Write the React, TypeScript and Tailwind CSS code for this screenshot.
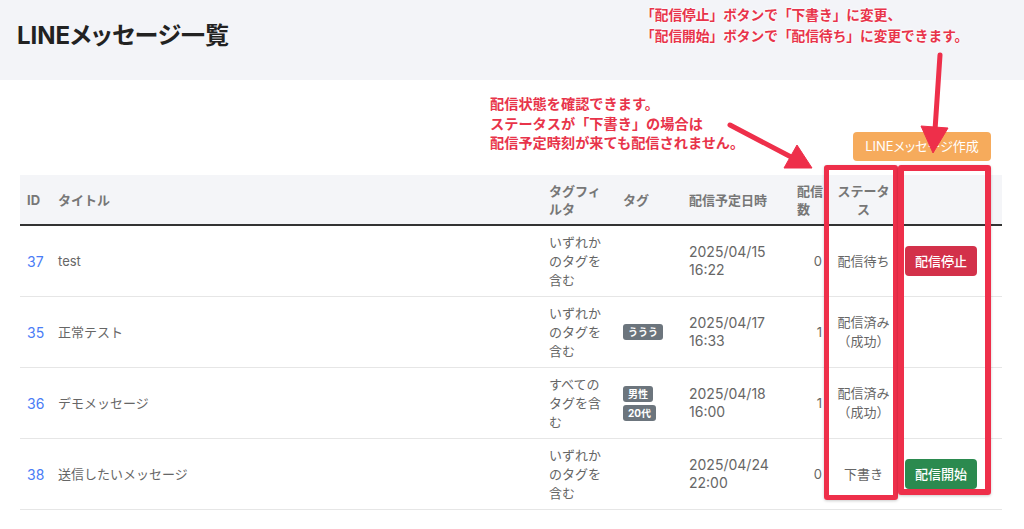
import React from 'react';

type Row = {
  id: number;
  title: string;
  filter: string[];
  tags: string[];
  date: string[];
  count: number;
  status: string[];
  action: 'stop' | 'start' | null;
};

const rows: Row[] = [
  { id: 37, title: 'test', filter: ['いずれか', 'のタグを', '含む'], tags: [], date: ['2025/04/15', '16:22'], count: 0, status: ['配信待ち'], action: 'stop' },
  { id: 35, title: '正常テスト', filter: ['いずれか', 'のタグを', '含む'], tags: ['ううう'], date: ['2025/04/17', '16:33'], count: 1, status: ['配信済み', '（成功）'], action: null },
  { id: 36, title: 'デモメッセージ', filter: ['すべての', 'タグを含', 'む'], tags: ['男性', '20代'], date: ['2025/04/18', '16:00'], count: 1, status: ['配信済み', '（成功）'], action: null },
  { id: 38, title: '送信したいメッセージ', filter: ['いずれか', 'のタグを', '含む'], tags: [], date: ['2025/04/24', '22:00'], count: 0, status: ['下書き'], action: 'start' },
];

const cols = 'grid grid-cols-[30px_491px_74px_66px_108px_41px_67px_105px]';

const Lines = ({ lines }: { lines: string[] }) => (
  <div>
    {lines.map((l, i) => (
      <div key={i}>{l}</div>
    ))}
  </div>
);

// annotation overlay: arrows and red boxes
const Annotations: React.FC = () => (
  <div className="pointer-events-none absolute inset-0">
    <div className="absolute left-[641px] top-[5px] text-[13.7px] leading-[21px] font-bold text-[#e8344a] whitespace-nowrap [text-shadow:0_0_3px_#fff,0_0_3px_#fff]">
      <div>「配信停止」ボタンで「下書き」に変更、</div>
      <div>「配信開始」ボタンで「配信待ち」に変更できます。</div>
    </div>
    <div className="absolute left-[490px] top-[94px] text-[14.2px] leading-[19.5px] font-bold text-[#e8344a] whitespace-nowrap [text-shadow:0_0_3px_#fff,0_0_3px_#fff]">
      <div>配信状態を確認できます。</div>
      <div>ステータスが「下書き」の場合は</div>
      <div>配信予定時刻が来ても配信されません。</div>
    </div>
    <div className="absolute left-[824px] top-[165px] w-[74px] h-[335px] border-[5px] border-[#ee2f4a] rounded-[3px] shadow-[0_1px_3px_rgba(0,0,0,0.2)]" />
    <div className="absolute left-[898px] top-[165px] w-[93px] h-[330px] border-[6px] border-[#ee2f4a] rounded-[3px] shadow-[0_1px_3px_rgba(0,0,0,0.2)]" />
    <svg className="absolute left-0 top-0" width="1024" height="529" viewBox="0 0 1024 529">
      <g fill="#ee2f4a" stroke="#ee2f4a">
        <line x1="940" y1="55" x2="935" y2="130" strokeWidth="5" strokeLinecap="round" />
        <polygon points="921,126 948,128 933,153" strokeWidth="1" strokeLinejoin="round" />
        <line x1="730" y1="125" x2="793" y2="158" strokeWidth="5" strokeLinecap="round" />
        <polygon points="784,168 797,145 812,168" strokeWidth="1" strokeLinejoin="round" />
      </g>
    </svg>
  </div>
);

const App: React.FC = () => {
  return (
    <div className="relative w-[1024px] h-[529px] overflow-hidden bg-white text-[13px] text-[#666] font-['Inter','Noto_Sans_CJK_JP',sans-serif]">
      <div className="h-20 bg-[#f3f4f8] flex items-center pl-[17px] pb-2">
        <h1 className="text-[24px] font-bold text-[#222] [font-feature-settings:'palt']">LINEメッセージ一覧</h1>
      </div>

      <div className="pt-[52px] px-[20px] pr-[22px]">
        <div className="flex justify-end pr-[11px]">
          <button className="w-[138px] h-[29px] rounded-[4px] bg-[#f6ab5c] text-white text-[13px] [font-feature-settings:'palt']">
            LINEメッセージ作成
          </button>
        </div>

        <div className="mt-[14px] w-[982px]">
          <div className={`${cols} h-[51px] bg-[#f4f5f8] border-b-2 border-[#333] items-center font-bold text-[#777] leading-[18px]`}>
            <div className="pl-[7px]">ID</div>
            <div className="pl-2">タイトル</div>
            <div className="pl-2"><Lines lines={['タグフィ', 'ルタ']} /></div>
            <div className="pl-2">タグ</div>
            <div className="pl-2">配信予定日時</div>
            <div className="pl-2 whitespace-nowrap"><Lines lines={['配信', '数']} /></div>
            <div className="text-center"><Lines lines={['ステータ', 'ス']} /></div>
            <div />
          </div>

          {rows.map((r) => (
            <div key={r.id} className={`${cols} h-[71px] border-b border-[#e6e6e6] items-center leading-[19px]`}>
              <div className="pl-[7px] text-[#4a7cf6] text-[14px]">{r.id}</div>
              <div className="pl-2">{r.title}</div>
              <div className="pl-2"><Lines lines={r.filter} /></div>
              <div className="pl-2 flex flex-col items-start gap-[3px]">
                {r.tags.map((t) => (
                  <span key={t} className="h-4 px-[5px] rounded-[3px] bg-[#6c757d] text-white text-[10px] font-bold leading-4">
                    {t}
                  </span>
                ))}
              </div>
              <div className="pl-2 leading-[18px] text-[14px]"><Lines lines={r.date} /></div>
              <div className="pr-2 text-right">{r.count}</div>
              <div className="text-center"><Lines lines={r.status} /></div>
              <div className="pl-2">
                {r.action === 'stop' && (
                  <button className="w-[72px] h-[30px] rounded-[4px] bg-[#d3314a] text-white font-medium">配信停止</button>
                )}
                {r.action === 'start' && (
                  <button className="w-[72px] h-[30px] rounded-[4px] bg-[#2b8a4f] text-white font-medium">配信開始</button>
                )}
              </div>
            </div>
          ))}
        </div>
      </div>

      <Annotations />
    </div>
  );
};

export default App;
